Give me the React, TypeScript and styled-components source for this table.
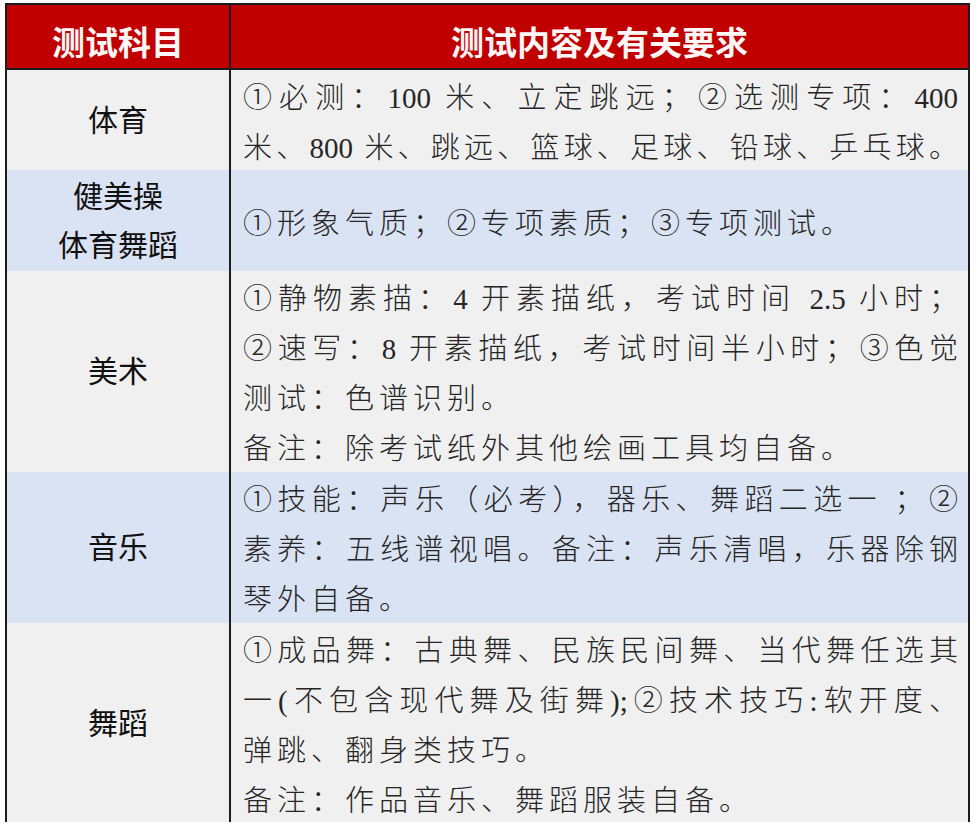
import styled, { createGlobalStyle } from 'styled-components'

const GlobalStyle = createGlobalStyle`
	html, body {
		margin: 0;
		padding: 0;
		background: #ffffff;
	}
`

const Page = styled.div`
	padding: 3px 6px 0 5px;
	width: 976px;
	box-sizing: border-box;
`

const Table = styled.div`
	display: flex;
	flex-direction: column;
	gap: 2px;
	padding: 2px;
	width: 965px;
	box-sizing: border-box;
	background: #1c1c1c;
`

type Tone = 'head' | 'gray' | 'blue'

const toneBg: Record<Tone, string> = {
	head: '#c00000',
	gray: '#f0f0f0',
	blue: '#dae3f3',
}

const Row = styled.div<{ $height: number }>`
	display: grid;
	grid-template-columns: 222px 1fr;
	gap: 2px;
	height: ${({ $height }) => $height}px;
`

const HeadCell = styled.div`
	display: flex;
	align-items: center;
	justify-content: center;
	padding-top: 9px;
	box-sizing: border-box;
	background: ${toneBg.head};
	color: #fff6f6;
	font-family: 'Noto Sans CJK SC', sans-serif;
	font-weight: 700;
	font-size: 33px;
	line-height: 40px;
`

const SubjectCell = styled.div<{ $tone: Tone }>`
	display: flex;
	flex-direction: column;
	align-items: center;
	justify-content: center;
	padding-bottom: 7px;
	box-sizing: border-box;
	background: ${({ $tone }) => toneBg[$tone]};
	color: #111;
	font-family: 'Noto Sans CJK SC', sans-serif;
	font-size: 30px;
	line-height: 49px;
`

const ContentCell = styled.div<{ $tone: Tone }>`
	display: flex;
	flex-direction: column;
	justify-content: center;
	padding: 3px 5px 0 12px;
	box-sizing: border-box;
	background: ${({ $tone }) => toneBg[$tone]};
	color: #262626;
	font-family: 'Liberation Serif', 'Noto Sans CJK SC', serif;
	font-weight: 300;
	font-size: 29px;
	line-height: 50px;
	letter-spacing: 5px;
`

// full lines are spread edge to edge by justification, short ones keep the spacing
const Line = styled.div<{ $full?: boolean }>`
	white-space: ${({ $full }) => ($full ? 'normal' : 'nowrap')};
	letter-spacing: ${({ $full }) => ($full ? '0' : '5px')};
	padding-right: ${({ $full }) => ($full ? '5px' : '0')};
	text-align: ${({ $full }) => ($full ? 'justify' : 'left')};
	text-align-last: ${({ $full }) => ($full ? 'justify' : 'left')};
	text-justify: inter-character;
`

type Item = {
	subject: string[]
	tone: Tone
	height: number
	lines: { text: string; full?: boolean }[]
}

const rows: Item[] = [
	{
		subject: ['体育'],
		tone: 'gray',
		height: 98,
		lines: [
			{ text: '①必测：100 米、立定跳远；②选测专项：400', full: true },
			{ text: '米、800 米、跳远、篮球、足球、铅球、乒乓球。', full: true },
		],
	},
	{
		subject: ['健美操', '体育舞蹈'],
		tone: 'blue',
		height: 99,
		lines: [{ text: '①形象气质；②专项素质；③专项测试。' }],
	},
	{
		subject: ['美术'],
		tone: 'gray',
		height: 199,
		lines: [
			{ text: '①静物素描：4 开素描纸，考试时间 2.5 小时；', full: true },
			{ text: '②速写：8 开素描纸，考试时间半小时；③色觉', full: true },
			{ text: '测试：色谱识别。' },
			{ text: '备注：除考试纸外其他绘画工具均自备。' },
		],
	},
	{
		subject: ['音乐'],
		tone: 'blue',
		height: 149,
		lines: [
			{ text: '①技能：声乐（必考），器乐、舞蹈二选一 ；②', full: true },
			{ text: '素养：五线谱视唱。备注：声乐清唱，乐器除钢', full: true },
			{ text: '琴外自备。' },
		],
	},
	{
		subject: ['舞蹈'],
		tone: 'gray',
		height: 197,
		lines: [
			{ text: '①成品舞：古典舞、民族民间舞、当代舞任选其', full: true },
			{ text: '一(不包含现代舞及街舞);②技术技巧:软开度、', full: true },
			{ text: '弹跳、翻身类技巧。' },
			{ text: '备注：作品音乐、舞蹈服装自备。' },
		],
	},
]

export default function App() {
	return (
		<Page>
			<GlobalStyle />
			<Table>
				<Row $height={63}>
					<HeadCell>测试科目</HeadCell>
					<HeadCell>测试内容及有关要求</HeadCell>
				</Row>
				{rows.map((row) => (
					<Row key={row.subject.join('')} $height={row.height}>
						<SubjectCell $tone={row.tone}>
							{row.subject.map((s) => (
								<div key={s}>{s}</div>
							))}
						</SubjectCell>
						<ContentCell $tone={row.tone}>
							{row.lines.map((l) => (
								<Line key={l.text} $full={l.full}>
									{l.text}
								</Line>
							))}
						</ContentCell>
					</Row>
				))}
			</Table>
		</Page>
	)
}
